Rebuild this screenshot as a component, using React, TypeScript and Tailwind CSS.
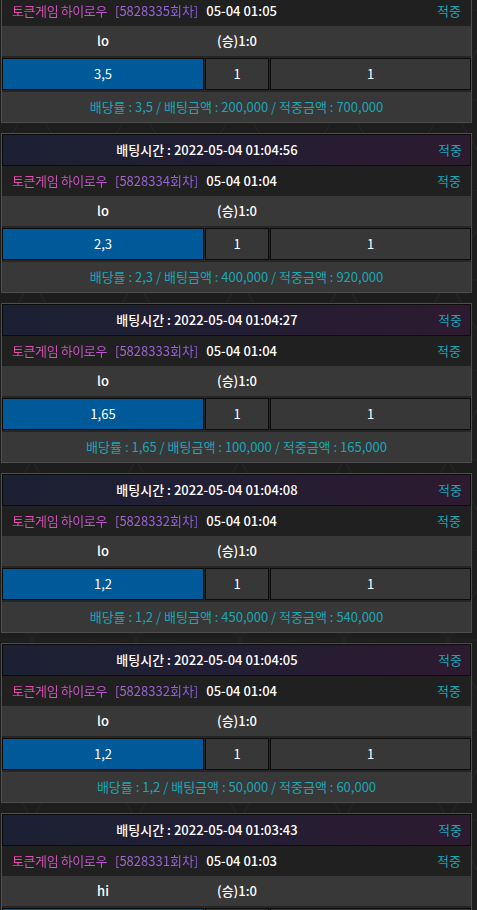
import React from "react";

type Bet = {
  time?: string;
  round: string;
  when: string;
  pick: string;
  score: string;
  odds: string;
  amount: string;
  win: string;
};

const bets: Bet[] = [
  { time: "2022-05-04 01:05:20", round: "5828335", when: "05-04 01:05", pick: "lo", score: "(승)1:0", odds: "3,5", amount: "200,000", win: "700,000" },
  { time: "2022-05-04 01:04:56", round: "5828334", when: "05-04 01:04", pick: "lo", score: "(승)1:0", odds: "2,3", amount: "400,000", win: "920,000" },
  { time: "2022-05-04 01:04:27", round: "5828333", when: "05-04 01:04", pick: "lo", score: "(승)1:0", odds: "1,65", amount: "100,000", win: "165,000" },
  { time: "2022-05-04 01:04:08", round: "5828332", when: "05-04 01:04", pick: "lo", score: "(승)1:0", odds: "1,2", amount: "450,000", win: "540,000" },
  { time: "2022-05-04 01:04:05", round: "5828332", when: "05-04 01:04", pick: "lo", score: "(승)1:0", odds: "1,2", amount: "50,000", win: "60,000" },
  { time: "2022-05-04 01:03:43", round: "5828331", when: "05-04 01:03", pick: "hi", score: "(승)1:0", odds: "1,9", amount: "100,000", win: "190,000" },
];

function HexBg() {
  return (
    <svg className="pointer-events-none absolute inset-0 h-full w-full" xmlns="http://www.w3.org/2000/svg">
      <defs>
        <pattern id="hex" width="104" height="180" patternUnits="userSpaceOnUse" x="-20" y="10">
          <path
            d="M0 0 L52 90 L0 180 M104 0 L52 90 L104 180 M52 90 L0 90 M52 90 L104 90 M0 0 L104 0"
            fill="none"
            stroke="rgba(255,255,255,0.03)"
            strokeWidth="1.2"
          />
        </pattern>
      </defs>
      <rect width="100%" height="100%" fill="url(#hex)" />
    </svg>
  );
}

function Card({ b }: { b: Bet }) {
  return (
    <div className="w-[471px] border border-[#4e4e4e] bg-[#242424]/80">
      <div className="flex h-[32px] items-center border border-[#0c0c0c] bg-gradient-to-r from-[#1c2033] via-[#221e33] to-[#2d1a30]">
        <span className="w-[408px] text-center text-[13px] font-medium text-white">배팅시간 : {b.time}</span>
        <span className="flex-1 pr-[8px] text-right text-[13px] text-[#1ba6b6]">적중</span>
      </div>
      <div className="flex h-[30px] items-center pl-[10px] pr-[10px] bg-[#202020]/70">
        <span className="text-[13px] tracking-[-0.4px] bg-gradient-to-r from-[#e84aa8] to-[#b85ad0] bg-clip-text text-transparent">
          토큰게임 하이로우
        </span>
        <span className="ml-[8px] text-[13px] bg-gradient-to-r from-[#a86ad0] to-[#8a5ee0] bg-clip-text text-transparent">
          [{b.round}회차]
        </span>
        <span className="ml-[8px] text-[13px] font-medium text-white">{b.when}</span>
        <span className="ml-auto text-[13px] text-[#1ba6b6]">적중</span>
      </div>
      <div className="grid h-[30px] grid-cols-[202px_64px_1fr] gap-[1px] items-center bg-[#3b3b3b]/90 text-[13px] font-medium text-white">
        <div className="text-center">{b.pick}</div>
        <div className="text-center whitespace-nowrap">{b.score}</div>
        <div />
      </div>
      <div className="grid h-[36px] grid-cols-[202px_64px_1fr] gap-[1px] py-[2px] bg-[#262626]/90 text-[13px] text-white">
        <div className="flex items-center justify-center border border-[#0c0c0c] bg-[#005a9a]">{b.odds}</div>
        <div className="flex items-center justify-center border border-[#0c0c0c] bg-[#3a3a3a]/90">1</div>
        <div className="flex items-center justify-center border border-[#0c0c0c] bg-[#3a3a3a]/90">1</div>
      </div>
      <div className="flex h-[30px] items-center justify-center bg-[#3b3b3b]/90 text-[13px] text-[#1ba6b6]">
        배당률 : {b.odds} / 배팅금액 : {b.amount} / 적중금액 : {b.win}
      </div>
    </div>
  );
}

export default function App() {
  return (
    <div
      className="relative h-[910px] w-[477px] overflow-hidden bg-[#1d1d1d]"
      style={{ fontFamily: '"Noto Sans CJK KR", "Noto Sans", sans-serif' }}
    >
      <HexBg />
      <div className="relative mt-[-37px] flex flex-col gap-[10px] pl-[1px]">
        {bets.map((b, i) => (
          <Card key={i} b={b} />
        ))}
      </div>
    </div>
  );
}
